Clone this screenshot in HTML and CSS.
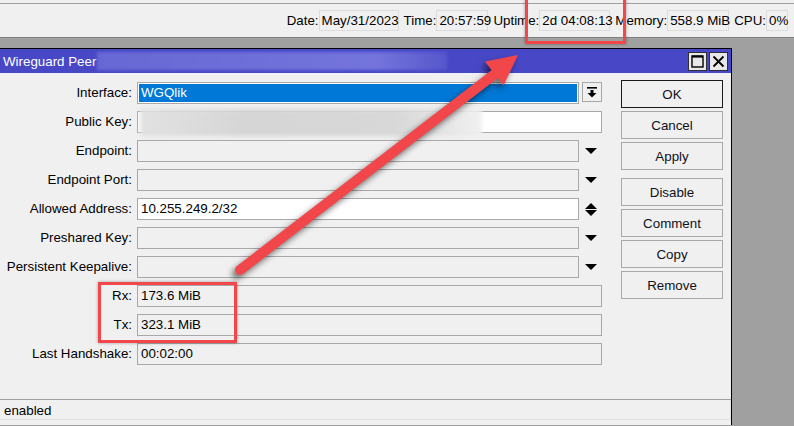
FILE: index.html
```html
<!DOCTYPE html>
<html>
<head>
    <title>Wireguard Peer</title>
    <link rel="stylesheet" href="styles.css">
</head>

<body>
    <div class="topbar">
        <div class="clock">
            <div class="stat"><span>Date:</span><span class="stat-value w-date">May/31/2023</span></div>
            <div class="stat"><span>Time:</span><span class="stat-value w-time">20:57:59</span></div>
            <div class="stat"><span>Uptime:</span><span class="stat-value w-uptime">2d 04:08:13</span></div>
            <div class="stat"><span>Memory:</span><span class="stat-value w-memory">558.9 MiB</span></div>
            <div class="stat"><span>CPU:</span><span class="stat-value w-cpu">0%</span></div>
        </div>
    </div>

    <div class="desk">
        <div class="window">
            <div class="titlebar">
                <span class="title">Wireguard Peer</span>
                <span class="title-hidden"></span>
                <div class="title-buttons">
                    <span class="tbtn">
                        <svg width="13" height="13" viewBox="0 0 13 13"><rect x="1" y="1" width="11" height="11" fill="none" stroke="#000" stroke-width="1.4"/><line x1="1" y1="1.6" x2="12" y2="1.6" stroke="#000" stroke-width="2"/></svg>
                    </span>
                    <span class="tbtn">
                        <svg width="13" height="13" viewBox="0 0 13 13"><path d="M1.5 1.5 L11.5 11.5 M11.5 1.5 L1.5 11.5" stroke="#000" stroke-width="1.8"/></svg>
                    </span>
                </div>
            </div>

            <div class="window-body">
                <div class="form">
                    <div class="row">
                        <label>Interface:</label>
                        <div class="field">
                            <div class="box selected">WGQlik</div>
                            <span class="drop-btn">
                                <svg width="10" height="11" viewBox="0 0 10 11"><rect x="0" y="0" width="10" height="1.6" fill="#000"/><rect x="3.5" y="3" width="3" height="3" fill="#000"/><path d="M0.5 6 L9.5 6 L5 10.5 Z" fill="#000"/></svg>
                            </span>
                        </div>
                    </div>
                    <div class="row">
                        <label>Public Key:</label>
                        <div class="field">
                            <div class="box white key"><span class="key-hidden"></span></div>
                        </div>
                    </div>
                    <div class="row">
                        <label>Endpoint:</label>
                        <div class="field">
                            <div class="box short"></div>
                            <span class="arrow"><i class="tri-down"></i></span>
                        </div>
                    </div>
                    <div class="row">
                        <label>Endpoint Port:</label>
                        <div class="field">
                            <div class="box short"></div>
                            <span class="arrow"><i class="tri-down"></i></span>
                        </div>
                    </div>
                    <div class="row">
                        <label>Allowed Address:</label>
                        <div class="field">
                            <div class="box short white">10.255.249.2/32</div>
                            <span class="arrow stacked"><i class="tri-up"></i><i class="tri-down"></i></span>
                        </div>
                    </div>
                    <div class="row">
                        <label>Preshared Key:</label>
                        <div class="field">
                            <div class="box short"></div>
                            <span class="arrow"><i class="tri-down"></i></span>
                        </div>
                    </div>
                    <div class="row">
                        <label>Persistent Keepalive:</label>
                        <div class="field">
                            <div class="box short"></div>
                            <span class="arrow"><i class="tri-down"></i></span>
                        </div>
                    </div>
                    <div class="row">
                        <label>Rx:</label>
                        <div class="field"><div class="box">173.6 MiB</div></div>
                    </div>
                    <div class="row">
                        <label>Tx:</label>
                        <div class="field"><div class="box">323.1 MiB</div></div>
                    </div>
                    <div class="row">
                        <label>Last Handshake:</label>
                        <div class="field"><div class="box">00:02:00</div></div>
                    </div>
                </div>

                <div class="actions">
                    <button class="btn default">OK</button>
                    <button class="btn">Cancel</button>
                    <button class="btn">Apply</button>
                    <button class="btn group">Disable</button>
                    <button class="btn">Comment</button>
                    <button class="btn">Copy</button>
                    <button class="btn">Remove</button>
                </div>
            </div>

            <div class="status"><span class="status-cell">enabled</span></div>
        </div>
    </div>

    <!-- red callouts drawn on top -->
    <svg class="callout-arrow" width="794" height="426" viewBox="0 0 794 426">
        <g class="arrow-shape">
            <line x1="240" y1="270" x2="500" y2="70" stroke="#f2474a" stroke-width="10" stroke-linecap="round"/>
            <path d="M518 55 L503.5 85.5 L485 61.5 Z" fill="#f2474a"/>
        </g>
    </svg>
    <div class="mark mark-uptime"></div>
    <div class="mark mark-traffic"></div>
</body>
</html>
```

FILE: styles.css
```css
body {
    margin: 0;
    width: 794px;
    height: 426px;
    overflow: hidden;
    position: relative;
    font-family: "Liberation Sans", Arial, sans-serif;
    font-size: 13.33px;
    color: #000;
    background-color: #a0a0a0;
}

/* clock strip */
.topbar {
    background-color: #f0f0f0;
    padding-top: 3px;
}

.clock {
    height: 33px;
    border-top: 1px solid #a0a0a0;
    border-bottom: 1px solid #808080;
    display: flex;
    justify-content: flex-end;
    align-items: center;
    gap: 5px;
    padding-right: 6px;
}

.stat {
    display: flex;
    align-items: center;
}

.stat-value {
    height: 21px;
    line-height: 20px;
    box-sizing: border-box;
    padding-left: 2px;
    border: 1px solid #dcdcdc;
    white-space: nowrap;
}

.w-date { width: 80px; }
.w-time { width: 52px; }
.w-uptime { width: 71px; }
.w-memory { width: 62px; }
.w-cpu { width: 22px; }

/* dialog */
.desk {
    padding-top: 10px;
}

.window {
    width: 731px;
    height: 376px;
    border-top: 1px solid #000;
    border-right: 1px solid #000;
    background-color: #f0f0f0;
}

.titlebar {
    height: 24px;
    background-color: #4848c6;
    display: flex;
    align-items: center;
    position: relative;
}

.title {
    color: #fff;
    padding-left: 3px;
}

.title-hidden {
    position: absolute;
    left: 97px;
    top: 3px;
    width: 350px;
    height: 18px;
    background: linear-gradient(to right, #6868d4, #7474dc 80%, #5656cc);
    filter: blur(1.5px);
}

.title-buttons {
    margin-left: auto;
    margin-right: 3px;
    display: flex;
    gap: 2px;
}

.tbtn {
    width: 19px;
    height: 19px;
    box-sizing: border-box;
    border: 1px solid #303030;
    background-color: #e8e8e8;
    display: flex;
    align-items: center;
    justify-content: center;
}

.window-body {
    height: 326px;
    display: flex;
}

.form {
    width: 602px;
    padding-top: 9px;
    display: flex;
    flex-direction: column;
    gap: 7px;
}

.row {
    display: grid;
    grid-template-columns: 132px 465px;
    column-gap: 5px;
    height: 22px;
}

.row label {
    text-align: right;
    line-height: 22px;
    white-space: nowrap;
}

.field {
    display: flex;
    height: 22px;
}

.box {
    flex: 1;
    box-sizing: border-box;
    height: 22px;
    line-height: 20px;
    padding-left: 3px;
    border: 1px solid #a8a8a8;
    background-color: #f0f0f0;
    white-space: nowrap;
}

.box.short {
    flex: none;
    width: 442px;
}

.box.white {
    background-color: #fff;
}

.box.selected {
    flex: none;
    width: 442px;
    background-color: #0078d7;
    color: #fff;
    box-shadow: inset 0 0 0 1px #fff;
}

.key {
    position: relative;
}

.key-hidden {
    position: absolute;
    left: 2px;
    top: -3px;
    width: 342px;
    height: 27px;
    background: linear-gradient(to right, #e2e2e2, #d6d6d6 30%, #d8d8d8 75%, #f0f0f0);
    filter: blur(2px);
}

.drop-btn {
    margin-left: 3px;
    width: 20px;
    height: 20px;
    box-sizing: border-box;
    border: 1px solid #a8a8a8;
    display: flex;
    align-items: center;
    justify-content: center;
}

.arrow {
    width: 23px;
    display: flex;
    flex-direction: column;
    align-items: center;
    justify-content: center;
    padding-left: 1px;
}

.arrow.stacked {
    gap: 1px;
}

.tri-down,
.tri-up {
    width: 0;
    height: 0;
    border-left: 6px solid transparent;
    border-right: 6px solid transparent;
}

.tri-down {
    border-top: 6px solid #000;
}

.tri-up {
    border-bottom: 6px solid #000;
}

/* button column */
.actions {
    margin-left: 19px;
    padding-top: 7px;
    width: 102px;
    display: flex;
    flex-direction: column;
    gap: 3px;
}

.btn {
    height: 28px;
    width: 102px;
    box-sizing: border-box;
    border: 1px solid #a8a8a8;
    background-color: #f0f0f0;
    font-family: "Liberation Sans", Arial, sans-serif;
    font-size: 13.33px;
    color: #101020;
    padding: 0;
}

.btn.default {
    border-color: #1a1a1a;
}

.btn.group {
    margin-top: 5px;
}

.status {
    border-top: 1px solid #a0a0a0;
    height: 25px;
    display: flex;
}

.status-cell {
    width: 727px;
    height: 19px;
    line-height: 22px;
    padding-left: 4px;
    border-right: 1px solid #e2e2e2;
    border-bottom: 1px solid #e2e2e2;
}

/* annotations */
.callout-arrow {
    position: absolute;
    left: 0;
    top: 0;
    pointer-events: none;
}

.arrow-shape {
    filter: drop-shadow(-3px 4px 3px rgba(0, 0, 0, 0.55));
}

.mark {
    position: absolute;
    border: 3px solid #f2474a;
    box-shadow: 0 0 3px rgba(0, 0, 0, 0.35);
}

.mark-uptime {
    left: 525px;
    top: -4px;
    width: 95px;
    height: 42px;
}

.mark-traffic {
    left: 98px;
    top: 282px;
    width: 133px;
    height: 55px;
}
```
